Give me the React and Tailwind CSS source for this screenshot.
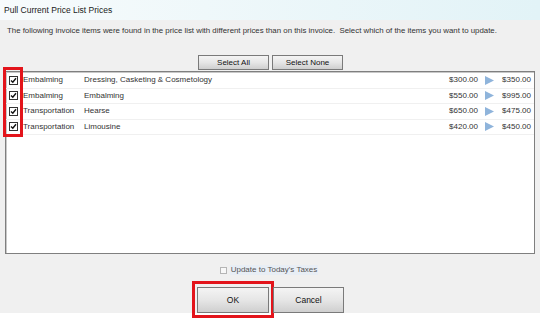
import React from "react";

const rows = [
  ["Embalming", "Dressing, Casketing & Cosmetology", "$300.00", "$350.00"],
  ["Embalming", "Embalming", "$550.00", "$995.00"],
  ["Transportation", "Hearse", "$650.00", "$475.00"],
  ["Transportation", "Limousine", "$420.00", "$450.00"],
];

function Check() {
  return (
    <div className="w-[9px] h-[9px] border border-[#333] bg-white flex items-center justify-center">
      <svg width="7" height="7" viewBox="0 0 7 7">
        <path d="M1 3.5 L2.8 5.3 L6 1.2" stroke="#111" strokeWidth="1.4" fill="none" />
      </svg>
    </div>
  );
}

function WinButton({ children, className }) {
  return (
    <div
      className={
        "flex items-center justify-center border border-[#7a7a7a] bg-gradient-to-b from-[#f4f4f4] via-[#e6e6e6] to-[#cfcfcf] text-[#111] " +
        className
      }
    >
      {children}
    </div>
  );
}

export default function App() {
  return (
    <div
      className="w-[540px] h-[318px] bg-white flex flex-col overflow-hidden text-[#222]"
      style={{ fontFamily: '"Liberation Sans", Arial, sans-serif' }}
    >
      <div className="h-[20px] shrink-0 bg-gradient-to-r from-[#f7fbfc] to-[#e2f3f7] flex items-center pl-[4px] text-[8.5px] text-[#1a1a1a]">
        Pull Current Price List Prices
      </div>
      <div className="h-[293px] shrink-0 bg-[#f0f0f0] flex flex-col relative">
        <div className="shrink-0 h-[16px] pl-[7px] pt-[6px] text-[7.85px] text-[#333] leading-[10px]">
          The following invoice items were found in the price list with different prices than on this invoice.&nbsp; Select which of the items you want to update.
        </div>
        <div className="shrink-0 flex pl-[198px] gap-[3px] mt-[19px]">
          <WinButton className="w-[71px] h-[15px] text-[8px]">Select All</WinButton>
          <WinButton className="w-[71px] h-[15px] text-[8px]">Select None</WinButton>
        </div>
        <div className="shrink-0 mx-[5px] mt-[1px] h-[183px] w-[530px] bg-white border border-[#7f7f7f] shadow-[inset_1px_1px_0_#c8c8c8] relative pt-[1px]">
          {rows.map((r, i) => (
            <div key={i} className="h-[15.5px] flex items-center border-b border-[#f0f0f0] text-[8px] text-[#333]">
              <div className="w-[17px] pl-[3px] flex items-center">
                <Check />
              </div>
              <div className="w-[61px]">{r[0]}</div>
              <div className="flex-1">{r[1]}</div>
              <div className="w-[40px] text-right">{r[2]}</div>
              <div className="w-[22px] flex justify-center">
                <svg width="9" height="9" viewBox="0 0 9 9">
                  <path d="M0 0 L9 4.5 L0 9 Z" fill="#8fb4db" />
                </svg>
              </div>
              <div className="w-[34px] text-right pr-[3px]">{r[3]}</div>
            </div>
          ))}
        </div>
        <div className="shrink-0 h-[10px] flex items-center justify-center mt-[11px] gap-[3px] pr-[2px]">
          <div className="w-[7px] h-[7px] border border-[#b5b5b5] bg-[#f8f8f8]" />
          <div className="text-[8px] leading-[10px] text-[#555] bg-[#e8eef5] px-[1px]">Update to Today's Taxes</div>
        </div>
        <div className="shrink-0 flex pl-[192px] mt-[6px] items-start">
          <div className="shrink-0 border-[3px] border-[#e3141b] px-[2px] pt-[3px] pb-0 h-[37px]">
            <WinButton className="w-[72px] h-[26px] text-[8.5px]">OK</WinButton>
          </div>
          <WinButton className="shrink-0 w-[71px] h-[26px] text-[8.5px] mt-[6px] -ml-[1px]">Cancel</WinButton>
        </div>
        <div className="absolute left-[3px] top-[47px] w-[20px] h-[70px] border-[3px] border-[#e3141b]" />
      </div>
    </div>
  );
}
